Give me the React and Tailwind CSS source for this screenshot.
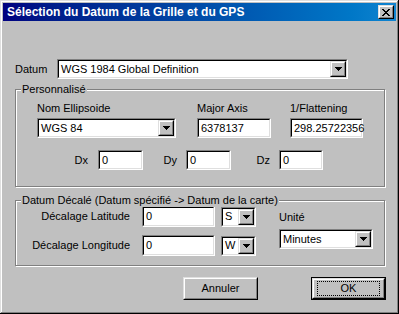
import React from 'react';

const FONT = { fontFamily: '"Liberation Sans", Arial, sans-serif' };

function Sunken({ className = '', children }) {
  return (
    <div className={`border border-t-[#808080] border-l-[#808080] border-b-white border-r-white ${className}`}>
      <div className="h-full w-full border border-t-black border-l-black border-b-[#dfdfdf] border-r-[#dfdfdf] bg-white flex items-center">
        {children}
      </div>
    </div>
  );
}

function Raised({ className = '', children }) {
  return (
    <div className={`border border-t-[#dfdfdf] border-l-[#dfdfdf] border-b-black border-r-black bg-[#c0c0c0] ${className}`}>
      <div className="h-full w-full border border-t-white border-l-white border-b-[#808080] border-r-[#808080] flex items-center justify-center">
        {children}
      </div>
    </div>
  );
}

function Arrow() {
  return (
    <svg width="7" height="4" viewBox="0 0 7 4" shapeRendering="crispEdges">
      <path d="M0 0h7v1H0zM1 1h5v1H1zM2 2h3v1H2zM3 3h1v1H3z" fill="#000" />
    </svg>
  );
}

function Edit({ value, className = '' }) {
  return (
    <Sunken className={`h-[20px] ${className}`}>
      <span className="pl-[2px] text-[11px] leading-[13px] text-black">{value}</span>
    </Sunken>
  );
}

function Combo({ value, className = '', h = 'h-[20px]' }) {
  return (
    <Sunken className={`${h} ${className}`}>
      <span className="flex-1 pl-[2px] text-[11px] leading-[13px] text-black whitespace-nowrap overflow-hidden">{value}</span>
      <Raised className="w-[16px] h-full">
        <Arrow />
      </Raised>
    </Sunken>
  );
}

function Group({ title, className = '', children }) {
  return (
    <div className={`relative border border-[#808080] shadow-[1px_1px_0_#fff,inset_1px_1px_0_#fff] ${className}`}>
      <span className="absolute left-[5px] top-[-7px] px-[1px] bg-[#c0c0c0] text-[11px] leading-[13px] whitespace-nowrap">
        {title}
      </span>
      {children}
    </div>
  );
}

export default function App() {
  return (
    <div
      style={FONT}
      className="w-[399px] h-[314px] bg-[#c0c0c0] p-[3px] text-black text-[11px] shadow-[inset_-1px_-1px_0_#000,inset_1px_1px_0_#dfdfdf,inset_-2px_-2px_0_#808080,inset_2px_2px_0_#fff]"
    >
      {/* title bar */}
      <div className="h-[18px] flex items-center bg-gradient-to-r from-[#000080] to-[#1084d0] pl-[4px] pr-[2px]">
        <span className="flex-1 text-white font-bold text-[12px] leading-[14px] whitespace-nowrap">
          Sélection du Datum de la Grille et du GPS
        </span>
        <Raised className="w-[16px] h-[14px]">
          <svg width="8" height="7" viewBox="0 0 8 7" shapeRendering="crispEdges">
            <path d="M0 0h2v1H0zM6 0h2v1H6zM1 1h2v1H1zM5 1h2v1H5zM2 2h4v1H2zM3 3h2v1H3zM2 4h4v1H2zM1 5h2v1H1zM5 5h2v1H5zM0 6h2v1H0zM6 6h2v1H6z" fill="#000" />
          </svg>
        </Raised>
      </div>

      <div className="pl-[12px]">
        {/* Datum row */}
        <div className="mt-[38px] flex items-center h-[20px]">
          <span className="w-[42px] leading-[13px]">Datum</span>
          <Combo value="WGS 1984 Global Definition" className="w-[291px]" />
        </div>

        {/* Personnalisé */}
        <Group title="Personnalisé" className="mt-[10px] w-[370px] h-[98px]">
          <div className="flex pl-[21px] pt-[12px]">
            <div className="w-[139px] flex flex-col">
              <span className="h-[13px] leading-[13px] mb-[3px]">Nom Ellipsoide</span>
              <Combo value="WGS 84" />
            </div>
            <div className="ml-[21px] w-[74px] flex flex-col">
              <span className="h-[13px] leading-[13px] mb-[3px]">Major Axis</span>
              <Edit value="6378137" />
            </div>
            <div className="ml-[19px] w-[73px] flex flex-col">
              <span className="h-[13px] leading-[13px] mb-[3px]">1/Flattening</span>
              <Edit value="298.25722356" />
            </div>
          </div>
          <div className="flex items-center mt-[12px]">
            <span className="w-[82px] pr-[10px] text-right leading-[13px]">Dx</span>
            <Edit value="0" className="w-[45px]" />
            <span className="w-[43px] pr-[9px] text-right leading-[13px]">Dy</span>
            <Edit value="0" className="w-[45px]" />
            <span className="w-[48px] pr-[9px] text-right leading-[13px]">Dz</span>
            <Edit value="0" className="w-[44px]" />
          </div>
        </Group>

        {/* Datum décalé */}
        <Group title="Datum Décalé (Datum spécifié -> Datum de la carte)" className="mt-[13px] w-[370px] h-[66px]">
          <div className="flex">
            <div className="flex flex-col pt-[5px]">
              <div className="flex items-center h-[21px]">
                <span className="w-[126px] pr-[12px] text-right leading-[13px]">Décalage Latitude</span>
                <Edit value="0" className="w-[73px] !h-[21px]" />
                <Combo value="S" className="ml-[6px] w-[35px]" />
              </div>
              <div className="flex items-center h-[21px] mt-[8px]">
                <span className="w-[126px] pr-[12px] text-right leading-[13px]">Décalage Longitude</span>
                <Edit value="0" className="w-[73px] !h-[21px]" />
                <Combo value="W" className="ml-[6px] w-[35px]" />
              </div>
            </div>
            <div className="ml-[23px] pt-[10px] flex flex-col">
              <span className="h-[13px] leading-[13px] mb-[5px]">Unité</span>
              <Combo value="Minutes" className="w-[94px]" />
            </div>
          </div>
        </Group>

        {/* buttons */}
        <div className="flex mt-[11px]">
          <Raised className="ml-[168px] w-[75px] h-[23px]">
            <span className="leading-[13px]">Annuler</span>
          </Raised>
          <div className="ml-[53px] w-[75px] h-[23px] border border-black">
            <Raised className="w-full h-full">
              <div className="w-[63px] h-[15px] border border-dotted border-black flex items-center justify-center">
                <span className="leading-[13px]">OK</span>
              </div>
            </Raised>
          </div>
        </div>
      </div>
    </div>
  );
}
